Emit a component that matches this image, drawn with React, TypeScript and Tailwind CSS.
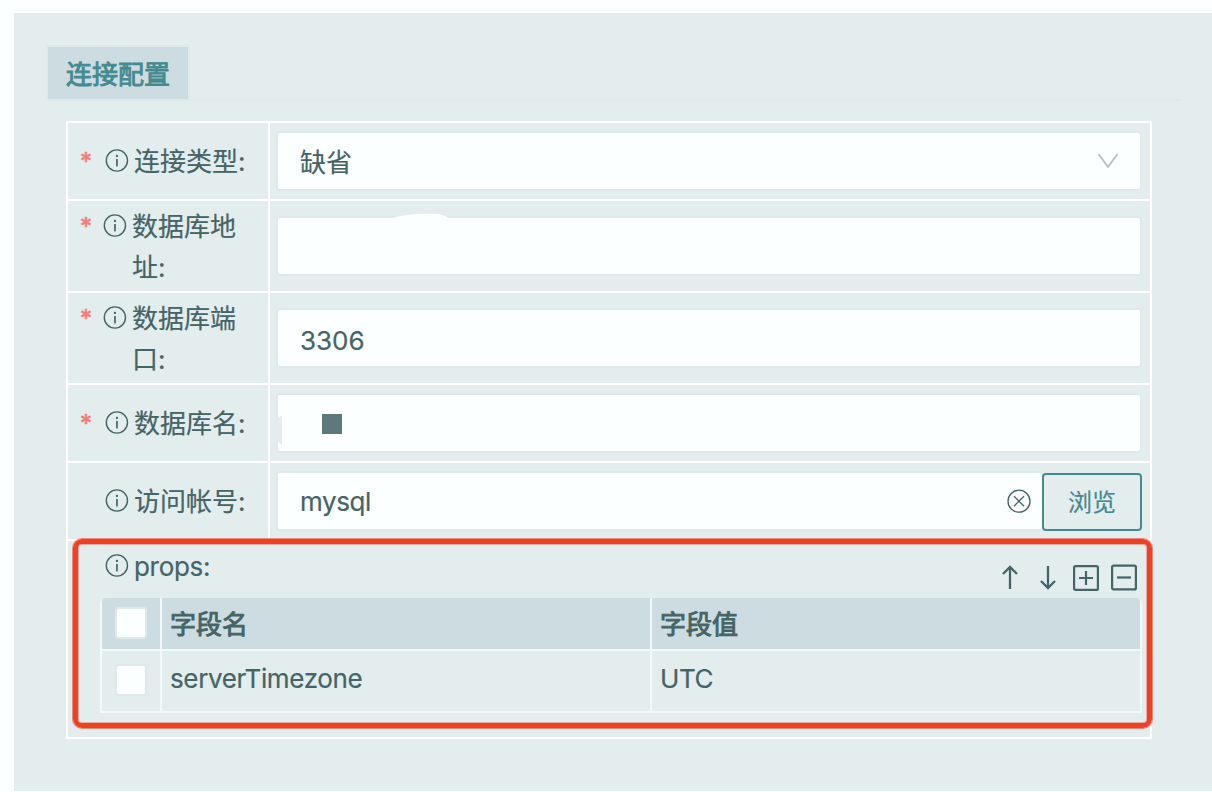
import React from "react";

function InfoIcon() {
  return (
    <svg width="26" height="26" viewBox="0 0 26 26" fill="none" className="shrink-0">
      <circle cx="12.9" cy="12.5" r="10.6" stroke="#446466" strokeWidth="1.4" />
      <rect x="12.1" y="11" width="1.7" height="7.4" fill="#446466" />
      <circle cx="12.95" cy="8" r="1.15" fill="#446466" />
    </svg>
  );
}

type LabelProps = {
  required?: boolean;
  narrow?: boolean;
  children: React.ReactNode;
};

function Label({ required, narrow, children }: LabelProps) {
  return (
    <div
      className={
        narrow
          ? "flex w-[202px] shrink-0 items-start border-r-2 border-white pt-[4px] pl-3"
          : "flex w-[202px] shrink-0 items-start border-r-2 border-white pt-[17px] pl-3"
      }
    >
      <span className="h-[41px] w-[22px] shrink-0 pt-px text-[24px] leading-[41px] text-[#f27d7b] [-webkit-text-stroke:0.7px_#f27d7b]">
        {required ? "*" : ""}
      </span>
      <span className={narrow ? "flex h-[41px] w-[30px] shrink-0 items-center" : "ml-[2px] flex h-[41px] w-[30px] shrink-0 items-center"}>
        <InfoIcon />
      </span>
      <span className={narrow ? "w-[110px] pt-px leading-[41px]" : "pt-px leading-[41px] whitespace-nowrap"}>{children}</span>
    </div>
  );
}

function Row({ tall, children }: { tall?: boolean; children: React.ReactNode }) {
  return (
    <div className={tall ? "flex h-[92px] border-b-2 border-white" : "flex h-[78px] border-b-2 border-white"}>
      {children}
    </div>
  );
}

function Checkbox() {
  return <span className="block size-8 rounded-[4px] border-2 border-[#deeaea] bg-[#fcffff]" />;
}

const field =
  "relative flex h-[60px] items-center rounded-[4px] border-2 border-[#deeaea] bg-[#fcffff] pl-[22px]";

export default function App() {
  return (
    <div className="h-[792px] w-[1212px] overflow-hidden bg-[#fcffff] pt-[13px] pl-[14px] font-['Inter','Noto_Sans_CJK_SC',sans-serif] text-[26px] text-[#446466] [-webkit-text-stroke:0.2px]">
      <div className="h-[778px] bg-[#e4edee] pt-8 pl-8">
        <div className="flex h-14 w-[1136px] border-b-2 border-[#deeaea]">
          <div className="h-14 w-36 border-2 border-[#deeaea] bg-[#cddce0] pt-px pl-[18px] leading-[54px] text-[#448a90] [-webkit-text-stroke:0.9px]">
            连接配置
          </div>
        </div>

        <div className="relative mt-5 ml-5 flex h-[618px] w-[1086px] flex-col border-2 border-white">
          <Row>
            <Label required>连接类型:</Label>
            <div className="flex-1 pt-2 pr-2 pl-[6px]">
              <div className={field}>
                <span className="pt-[2px]">缺省</span>
                <svg width="22" height="16" viewBox="0 0 22 16" fill="none" className="mr-[21px] ml-auto">
                  <path d="M1.5 1L11 14L20.5 1" stroke="#b9bcbf" strokeWidth="1.8" />
                </svg>
              </div>
            </div>
          </Row>
          <Row tall>
            <Label required narrow>数据库地址:</Label>
            <div className="flex-1 pt-[15px] pr-2 pl-[6px]">
              <div className={field}>
                <svg width="60" height="6" viewBox="0 0 60 6" className="absolute -top-[5px] left-[114px]">
                  <path d="M0 5Q20 0 44 1Q52 1 57 6H0Z" fill="#fcffff" />
                </svg>
              </div>
            </div>
          </Row>
          <Row tall>
            <Label required narrow>数据库端口:</Label>
            <div className="flex-1 pt-[15px] pr-2 pl-[6px]">
              <div className={field}>
                <span className="pt-[5px]">3306</span>
              </div>
            </div>
          </Row>
          <Row>
            <Label required>数据库名:</Label>
            <div className="flex-1 pt-2 pr-2 pl-[6px]">
              <div className={field}>
                <svg width="6" height="30" viewBox="0 0 6 30" className="absolute top-[20px] -left-[2px]">
                  <path d="M6 0V30L0 25V5Z" fill="#e4edee" />
                </svg>
                <span className="mt-[2px] ml-[22px] size-5 bg-[#5d797b]" />
              </div>
            </div>
          </Row>
          <Row>
            <Label>访问帐号:</Label>
            <div className="flex flex-1 pt-2 pr-2 pl-[6px]">
              <div className="-mr-[2px] flex h-[60px] flex-1 items-center rounded-[4px] border-2 border-[#deeaea] bg-[#fcffff] pl-[22px]">
                <span className="tracking-[-0.4px]">mysql</span>
                <svg width="26" height="26" viewBox="0 0 26 26" fill="none" className="mr-[10px] ml-auto">
                  <circle cx="13" cy="13.2" r="11" stroke="#446466" strokeWidth="1.3" />
                  <path d="M8 8.2L18 18.2M18 8.2L8 18.2" stroke="#446466" strokeWidth="1.3" />
                </svg>
              </div>
              <button className="relative mt-[2px] h-[58px] w-[100px] rounded-[4px] border-2 border-[#448a90] bg-[#e4edee] pt-[2px] text-[24px] text-[#448a90]">
                浏览
              </button>
            </div>
          </Row>

          <div className="flex flex-1 flex-col pr-2 pl-8">
            <div className="flex h-[57px] items-start justify-between">
              <div className="flex pt-1 pl-1">
                <span className="flex h-[41px] w-[30px] items-center">
                  <InfoIcon />
                </span>
                <span className="leading-[43px] tracking-[-0.3px]">props:</span>
              </div>
              <div className="flex gap-[10px] pt-[22px] pr-1">
                <svg width="28" height="28" viewBox="0 0 28 28" fill="none" stroke="#446466" strokeWidth="2.3">
                  <path d="M14 26V4M7 11L14 4L21 11" />
                </svg>
                <svg width="28" height="28" viewBox="0 0 28 28" fill="none" stroke="#446466" strokeWidth="2.3">
                  <path d="M14 3V25M7 18L14 25L21 18" />
                </svg>
                <svg width="28" height="28" viewBox="0 0 28 28" fill="none" stroke="#446466" strokeWidth="2.2">
                  <rect x="2.1" y="3.1" width="23.8" height="23.8" rx="1.5" />
                  <path d="M7 15H21M14 8V22" />
                </svg>
                <svg width="28" height="28" viewBox="0 0 28 28" fill="none" stroke="#446466" strokeWidth="2.2">
                  <rect x="2.1" y="2.6" width="23.8" height="23.8" rx="1.5" />
                  <path d="M7 14.5H21" />
                </svg>
              </div>
            </div>
            <div className="grid h-[115px] grid-cols-[60px_490px_488px] grid-rows-[53px_60px] rounded-t-[6px] border-x-2 border-b-2 border-[#f3f8fa]">
              <div className="rounded-tl-[4px] border-r-2 border-b-2 border-[#f3f8fa] bg-[#cddce0] pt-[9px] pl-[13px]">
                <Checkbox />
              </div>
              <div className="border-r-2 border-b-2 border-[#f3f8fa] bg-[#cddce0] pl-2 leading-[53px] [-webkit-text-stroke:0.9px]">字段名</div>
              <div className="rounded-tr-[4px] border-b-2 border-[#f3f8fa] bg-[#cddce0] pl-2 leading-[53px] [-webkit-text-stroke:0.9px]">字段值</div>
              <div className="border-r-2 border-[#f3f8fa] pt-[13px] pl-[13px]">
                <Checkbox />
              </div>
              <div className="border-r-2 border-[#f3f8fa] pl-2 leading-[55px] tracking-[-0.36px]">serverTimezone</div>
              <div className="pl-2 leading-[55px] tracking-[-0.4px]">UTC</div>
            </div>
          </div>

          <div className="pointer-events-none absolute top-[416px] left-[5px] h-[189px] w-[1079px] rounded-[9px] border-[5px] border-[#ec4125] shadow-[0_0_0_1px_#ec412590,inset_0_0_0_1px_#ec412560]" />
        </div>
      </div>
    </div>
  );
}
